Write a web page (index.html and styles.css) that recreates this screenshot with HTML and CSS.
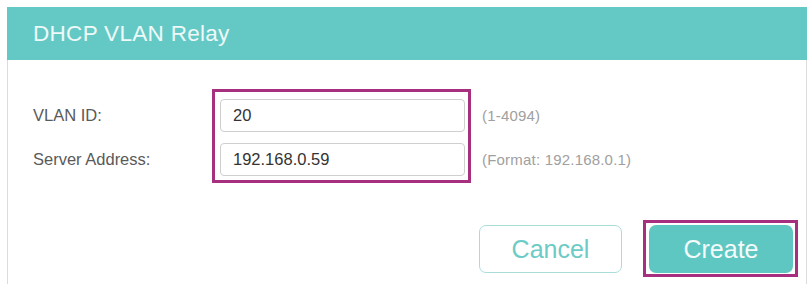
FILE: index.html
```html
<!DOCTYPE html>
<html>
<head>
<meta charset="utf-8">
<link rel="stylesheet" href="styles.css">
</head>
<body>
<div class="dialog">
  <div class="header">DHCP VLAN Relay</div>
  <div class="content">
    <div class="form">
      <div class="labels">
        <div class="row">VLAN ID:</div>
        <div class="row">Server Address:</div>
      </div>
      <div class="highlight fields">
        <input class="field" type="text" value="20">
        <input class="field" type="text" value="192.168.0.59">
      </div>
      <div class="hints">
        <div class="row">(1-4094)</div>
        <div class="row">(Format: 192.168.0.1)</div>
      </div>
    </div>
    <div class="actions">
      <button class="btn btn-cancel">Cancel</button>
      <div class="highlight create-wrap">
        <button class="btn btn-create">Create</button>
      </div>
    </div>
  </div>
</div>
</body>
</html>
```
FILE: styles.css
```css
html, body {
  margin: 0;
  padding: 0;
  background: #ffffff;
}
body {
  font-family: "Liberation Sans", Arial, sans-serif;
  width: 812px;
  height: 284px;
  overflow: hidden;
}
.dialog {
  margin: 7px 0 0 7px;
  width: 800px;
}
.header {
  height: 53px;
  line-height: 54px;
  background: #64c9c5;
  color: #eef9f8;
  font-size: 22.5px;
  letter-spacing: 0.3px;
  padding-left: 26px;
}
.content {
  border-left: 1px solid #dcdcdc;
  border-right: 1px solid #dcdcdc;
  height: 230px;
  padding: 29px 8px 0 25px;
  box-sizing: border-box;
}
.form {
  display: flex;
  align-items: flex-start;
}
.labels, .hints {
  display: flex;
  flex-direction: column;
  gap: 11px;
  padding-top: 10px;
}
.labels {
  width: 179px;
  color: #5a5a5a;
  font-size: 16.5px;
}
.hints {
  margin-left: 11px;
  color: #a0a0a0;
  font-size: 15px;
  letter-spacing: 0.2px;
}
.row {
  height: 33px;
  line-height: 33px;
  white-space: nowrap;
}
.highlight {
  border: 3px solid #a62f80;
}
.fields {
  display: flex;
  flex-direction: column;
  gap: 11px;
  padding: 7px 3px 4px 5px;
}
.field {
  width: 245px;
  height: 33px;
  box-sizing: border-box;
  border: 1px solid #cfcfcf;
  border-radius: 4px;
  padding: 0 12px;
  margin: 0;
  font-family: "Liberation Sans", Arial, sans-serif;
  font-size: 16.5px;
  color: #333333;
  background: #ffffff;
  outline: none;
}
.actions {
  display: flex;
  justify-content: flex-end;
  align-items: flex-start;
  margin-top: 37px;
}
.btn {
  height: 48px;
  box-sizing: border-box;
  border-radius: 7px;
  font-family: "Liberation Sans", Arial, sans-serif;
  font-size: 25px;
  padding: 0;
  margin: 0;
  cursor: pointer;
}
.btn-cancel {
  width: 143px;
  margin-top: 5px;
  margin-right: 21px;
  background: #ffffff;
  border: 1px solid #a9ddda;
  color: #6ccbc6;
}
.create-wrap {
  padding: 2px 2px 1px 3px;
}
.btn-create {
  width: 144px;
  display: block;
  background: #5fc7c2;
  border: none;
  color: #f4fbfb;
}
```
